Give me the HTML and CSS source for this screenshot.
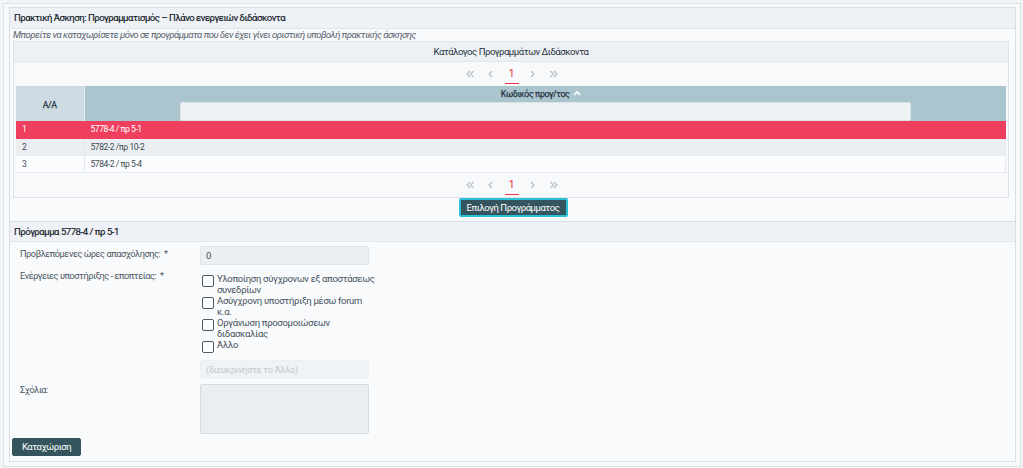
FILE: index.html
```html
<!DOCTYPE html>
<html lang="el">
<head>
<meta charset="utf-8">
<title>Πρακτική Άσκηση</title>
<link rel="stylesheet" href="styles.css">
</head>
<body>
<div class="page">
  <div class="panel">
    <div class="panel-head">Πρακτική Άσκηση: Προγραμματισμός – Πλάνο ενεργειών διδάσκοντα</div>
    <div class="note">Μπορείτε να καταχωρίσετε μόνο σε προγράμματα που δεν έχει γίνει οριστική υποβολή πρακτικής άσκησης</div>
    <div class="list-panel">
      <div class="list-head">Κατάλογος Προγραμμάτων Διδάσκοντα</div>
      <div class="pager">
        <span class="pg"><svg width="8" height="8" viewBox="0 0 8 8"><path d="M4 1 L1 4 L4 7 M7.5 1 L4.5 4 L7.5 7" fill="none" stroke="#b3bbc3" stroke-width="1.1"/></svg></span>
        <span class="pg"><svg width="5" height="8" viewBox="0 0 5 8"><path d="M4 1 L1 4 L4 7" fill="none" stroke="#b3bbc3" stroke-width="1.1"/></svg></span>
        <span class="pg cur">1</span>
        <span class="pg"><svg width="5" height="8" viewBox="0 0 5 8"><path d="M1 1 L4 4 L1 7" fill="none" stroke="#b3bbc3" stroke-width="1.1"/></svg></span>
        <span class="pg"><svg width="8" height="8" viewBox="0 0 8 8"><path d="M0.5 1 L3.5 4 L0.5 7 M4 1 L7 4 L4 7" fill="none" stroke="#b3bbc3" stroke-width="1.1"/></svg></span>
      </div>
      <table class="grid">
        <thead>
          <tr>
            <th class="col-aa">A/A</th>
            <th class="col-code">
              <div class="th-title">Κωδικός προγ/τος <svg class="caret" width="8" height="6" viewBox="0 0 8 6"><path d="M1 5 L4 2 L7 5" fill="none" stroke="#ffffff" stroke-width="1.6"/></svg></div>
              <input class="filter" type="text">
            </th>
          </tr>
        </thead>
        <tbody>
          <tr class="sel"><td>1</td><td>5778-4 / πρ 5-1</td></tr>
          <tr class="alt"><td>2</td><td>5782-2 /πρ 10-2</td></tr>
          <tr><td>3</td><td>5784-2 / πρ 5-4</td></tr>
        </tbody>
      </table>
      <div class="pager pager-bottom">
        <span class="pg"><svg width="8" height="8" viewBox="0 0 8 8"><path d="M4 1 L1 4 L4 7 M7.5 1 L4.5 4 L7.5 7" fill="none" stroke="#b3bbc3" stroke-width="1.1"/></svg></span>
        <span class="pg"><svg width="5" height="8" viewBox="0 0 5 8"><path d="M4 1 L1 4 L4 7" fill="none" stroke="#b3bbc3" stroke-width="1.1"/></svg></span>
        <span class="pg cur">1</span>
        <span class="pg"><svg width="5" height="8" viewBox="0 0 5 8"><path d="M1 1 L4 4 L1 7" fill="none" stroke="#b3bbc3" stroke-width="1.1"/></svg></span>
        <span class="pg"><svg width="8" height="8" viewBox="0 0 8 8"><path d="M0.5 1 L3.5 4 L0.5 7 M4 1 L7 4 L4 7" fill="none" stroke="#b3bbc3" stroke-width="1.1"/></svg></span>
      </div>
    </div>
    <div class="btn-row"><button class="btn btn-focus">Επιλογή Προγράμματος</button></div>
    <div class="section-head">Πρόγραμμα 5778-4 / πρ 5-1</div>
    <div class="form">
      <label class="lbl">Προβλεπόμενες ώρες απασχόλησης: &nbsp;*</label>
      <div class="field"><input class="inp" type="text" value="0"></div>

      <label class="lbl lbl-checks">Ενέργειες υποστήριξης - εποπτείας: &nbsp;*</label>
      <div class="field checks">
        <label class="chk"><span class="box"></span><span class="chk-text">Υλοποίηση σύγχρονων εξ αποστάσεως<br>συνεδρίων</span></label>
        <label class="chk"><span class="box"></span><span class="chk-text">Ασύγχρονη υποστήριξη μέσω forum<br>κ.α.</span></label>
        <label class="chk"><span class="box"></span><span class="chk-text">Οργάνωση προσομοιώσεων<br>διδασκαλίας</span></label>
        <label class="chk"><span class="box"></span><span class="chk-text">Άλλο</span></label>
      </div>

      <div class="lbl"></div>
      <div class="field"><input class="inp inp-other" type="text" placeholder="(διευκρινήστε το Άλλο)"></div>

      <label class="lbl lbl-comments">Σχόλια:</label>
      <div class="field"><textarea class="txt"></textarea></div>
    </div>
    <div class="submit-row"><button class="btn">Καταχώριση</button></div>
  </div>
</div>
</body>
</html>
```

FILE: styles.css
```css
* { box-sizing: border-box; }
html, body { margin: 0; padding: 0; }
body {
  background: #f1f3f5;
  font-family: Roboto, "Liberation Sans", Arial, sans-serif;
  font-size: 9.5px;
  letter-spacing: -0.45px;
  color: #2f3b45;
  width: 1023px;
  height: 468px;
  overflow: hidden;
}
.page {
  margin: 3px 2px 0 3px;
  height: 464px;
  border: 1px solid #dde2e6;
  background: #f8f9fb;
  padding: 3px 4px 4px 5px;
}
.panel {
  border: 1px solid #d9dee3;
  background: #f8fafc;
  height: 455px;
}
.panel-head {
  height: 21px;
  line-height: 20px;
  padding-left: 4px;
  background: #eef1f5;
  border-bottom: 1px solid #e1e5ea;
  color: #16222b;
  -webkit-text-stroke: 0.2px #16222b;
}
.note {
  height: 12px;
  line-height: 12px;
  padding-left: 3px;
  font-size: 9.5px;
  letter-spacing: -0.5px;
  font-style: italic;
  color: #56606a;
}
.list-panel {
  margin: 0 6px 0 3px;
  border: 1px solid #dfe3e8;
  background: #f7f9fb;
  height: 157px;
}
.list-head {
  height: 20px;
  line-height: 20px;
  text-align: center;
  background: #edf0f4;
  border-bottom: 1px solid #e3e7eb;
  color: #26323c;
}
.pager {
  height: 24px;
  display: flex;
  justify-content: center;
  align-items: center;
  padding-left: 1px;
}
.pager-bottom { height: 24px; }
.pg {
  width: 21px;
  height: 14px;
  display: flex;
  justify-content: center;
  align-items: center;
}
.cur {
  color: #e2364f;
  font-size: 11px;
  letter-spacing: 0;
  line-height: 14px;
  position: relative;
}
.cur::after {
  content: "";
  position: absolute;
  left: 4px;
  right: 3px;
  bottom: -3px;
  height: 1px;
  background: #e2364f;
}
.grid {
  margin: 0 1px 0 2px;
  width: 990px;
  border-collapse: collapse;
  table-layout: fixed;
}
.grid th {
  height: 35px;
  font-weight: 400;
  -webkit-text-stroke: 0.25px #25343e;
  font-size: 8.8px;
  letter-spacing: -0.4px;
  color: #25343e;
  vertical-align: middle;
  padding: 0;
}
.col-aa {
  width: 68px;
  background: #cddce2;
  border-right: 1px solid #e6edf0;
  color: #34495a;
}
.grid th.col-aa { padding-top: 2px; }
.col-code {
  background: #abc5cf;
}
.th-title {
  height: 13px;
  line-height: 13px;
  margin-top: 1px;
  padding-right: 8px;
}
.caret { margin-left: 2px; vertical-align: 1px; }
.filter {
  display: block;
  margin: 1px auto 0;
  width: 731px;
  height: 19px;
  border: 1px solid #dde4e8;
  background: #eef2f5;
  border-radius: 2px;
}
.grid td {
  height: 17px;
  padding: 0 0 0 6px;
  font-size: 8.5px;
  letter-spacing: -0.45px;
  color: #3e4a54;
  border-right: 1px solid #e4e8ec;
  border-bottom: 1px solid #e6e9ed;
}
.grid tbody tr { background: #fbfcfd; }
.grid tr.alt { background: #eceff2; }
.grid tr.sel { background: #ef3f5f; }
.grid tr.sel td { color: #ffffff; border-color: #ef3f5f; }
.btn-row {
  display: flex;
  justify-content: center;
  padding-left: 1px;
  height: 23px;
}
.btn {
  font-family: inherit;
  font-size: 9.5px;
  font-weight: 400;
  letter-spacing: -0.45px;
  color: #ffffff;
  background: #35555e;
  border: 1px solid #35555e;
  border-radius: 2px;
  height: 18px;
  padding: 0 9px;
  line-height: 14px;
}
.btn-focus {
  width: 109px;
  height: 19px;
  border: 2px solid #2bc0d8;
  padding: 0;
}
.section-head {
  height: 21px;
  line-height: 20px;
  padding-left: 4px;
  background: #eef1f5;
  border-top: 1px solid #d9dee3;
  border-bottom: 1px solid #e3e7eb;
  color: #16222b;
  -webkit-text-stroke: 0.2px #16222b;
}
.form {
  display: grid;
  grid-template-columns: 180px 170px;
  padding: 4px 0 0 10px;
  row-gap: 0;
}
.lbl {
  color: #4c5660;
  font-size: 9.2px;
  line-height: 12px;
}
.lbl:first-child { padding-top: 2px; }
.field { min-height: 0; }
.inp {
  display: block;
  width: 169px;
  height: 19px;
  border: 1px solid #e0e5e9;
  background: #eceff2;
  border-radius: 2px;
  font-family: inherit;
  font-size: 9.5px;
  letter-spacing: 0;
  color: #3e4a54;
  padding: 0 5px;
  margin-bottom: 3px;
}
.inp-other {
  background: #f0f3f5;
  border-color: #eef1f3;
  margin-top: 7px;
  margin-bottom: 5px;
  font-size: 9px;
  letter-spacing: -0.2px;
}
.inp-other::placeholder { color: #c2c8cd; }
.lbl-checks { padding-top: 2px; }
.checks {
  padding-top: 5px;
  display: flex;
  flex-direction: column;
}
.chk {
  display: flex;
  align-items: flex-start;
  color: #46525c;
  font-size: 9.5px;
  letter-spacing: -0.3px;
  line-height: 11px;
}
.box {
  flex: none;
  width: 12px;
  height: 12px;
  border: 1px solid #4d5963;
  border-radius: 2px;
  background: #fbfcfd;
  margin: 2px 3px 0 2px;
}
.chk-text { white-space: nowrap; }
.lbl-comments { padding-top: 0; margin-top: 0; }
.txt {
  display: block;
  width: 169px;
  height: 50px;
  border: 1px solid #d5dce1;
  background: #e9eef2;
  border-radius: 2px;
  resize: none;
  margin: 0;
}
.submit-row {
  padding: 4px 0 0 2px;
}
.submit-row .btn { width: 69px; padding: 0; }
```
